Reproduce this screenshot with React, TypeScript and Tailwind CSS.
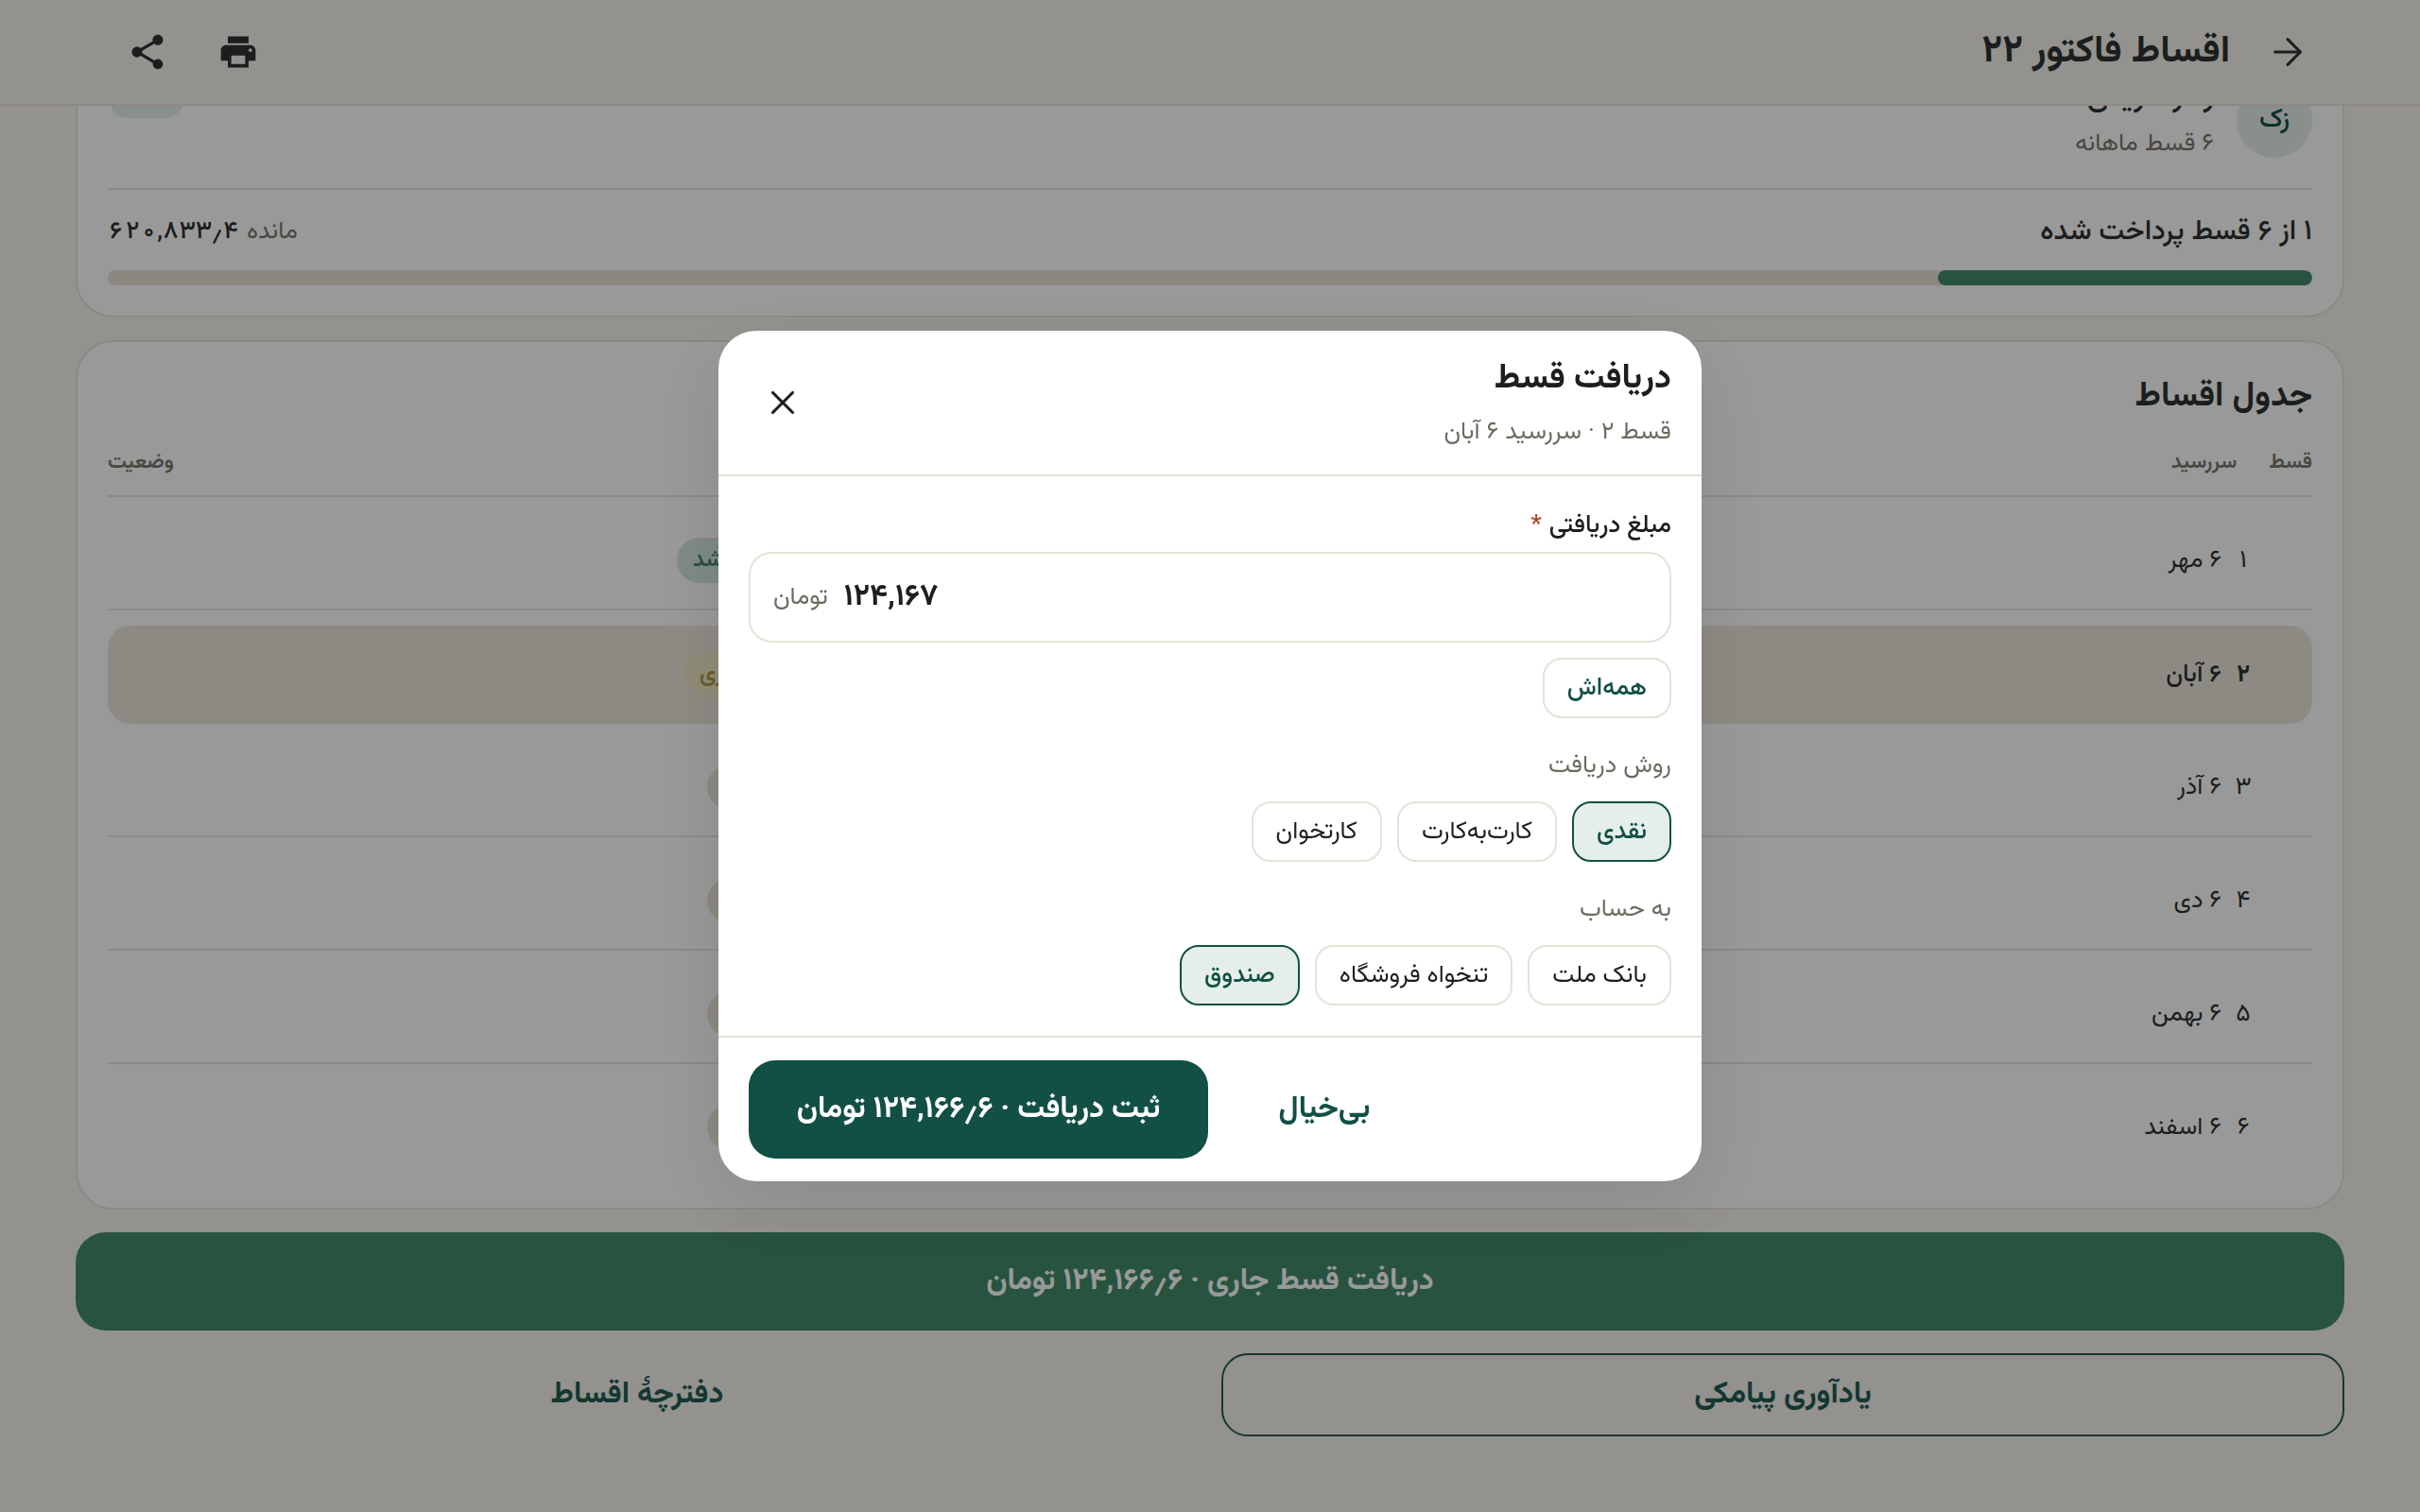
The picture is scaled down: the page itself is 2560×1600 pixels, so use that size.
import React from "react";
import { X, ArrowRight } from "lucide-react";

const ff = "font-['Vazirmatn','Noto_Sans_Arabic','Noto_Sans','DejaVu_Sans',sans-serif]";

function Chip({ label, on }: { label: string; on?: boolean }) {
  return (
    <button
      className={
        "h-[64px] px-[24px] rounded-[20px] border-2 text-[26px] " +
        (on
          ? "border-[#125045] bg-[#e5eeea] text-[#125045] font-medium"
          : "border-[#e6e2d8] bg-white text-[#1c1f1e]")
      }
    >
      {label}
    </button>
  );
}

function Row({ n, date, chip, chipClass, active, last }: { n: string; date: string; chip: string; chipClass: string; active?: boolean; last?: boolean }) {
  return (
    <div
      className={
        "mt-[16px] h-[104px] flex items-center justify-between " +
        (active ? "bg-[#ece7dd] rounded-[24px] font-medium" : last ? "border-b-2 border-transparent" : "border-b-2 border-[#e9e5da]")
      }
    >
      <div className="flex items-center text-[26px] text-[#2e3231]">
        <span className={"w-[96px] pr-[50px] text-center shrink-0 " + (active ? "font-bold" : "")}>{n}</span>
        <span className="shrink-0">{date}</span>
      </div>
      <span className={"h-[48px] px-[17px] flex items-center justify-end rounded-full text-[24px] font-semibold " + chipClass}>{chip}</span>
    </div>
  );
}

export default function App() {
  return (
    <div dir="rtl" className={"w-full h-screen overflow-hidden bg-[#f6f4ee] relative flex flex-col " + ff}>
      <header className="h-[112px] shrink-0 border-b-2 border-[#e9e5da] pr-[117px] pl-[134px] flex items-center justify-between relative z-10 bg-[#f6f4ee]">
        <div className="flex items-center gap-[38px]">
          <ArrowRight size={46} strokeWidth={1.6} className="text-[#2e3231]" />
          <h1 className="text-[40px] font-bold text-[#2e3231]">اقساط فاکتور ۲۲</h1>
        </div>
        <div className="flex items-center gap-[52px]">
          <svg width="44" height="44" viewBox="0 0 24 24" fill="#2e3231"><path d="M19 8H5c-1.66 0-3 1.34-3 3v6h4v4h12v-4h4v-6c0-1.66-1.34-3-3-3zm-3 11H8v-5h8v5zm3-7c-.55 0-1-.45-1-1s.45-1 1-1 1 .45 1 1-.45 1-1 1zm-1-9H6v4h12V3z" /></svg>
          <svg width="44" height="44" viewBox="0 0 24 24" fill="#2e3231"><path d="M18 16.08c-.76 0-1.44.3-1.96.77L8.91 12.7c.05-.23.09-.46.09-.7s-.04-.47-.09-.7l7.05-4.11c.54.5 1.25.81 2.04.81 1.66 0 3-1.34 3-3s-1.34-3-3-3-3 1.34-3 3c0 .24.04.47.09.7L8.04 9.81C7.5 9.31 6.79 9 6 9c-1.66 0-3 1.34-3 3s1.34 3 3 3c.79 0 1.5-.31 2.04-.81l7.12 4.16c-.05.21-.08.43-.08.65 0 1.61 1.31 2.92 2.92 2.92 1.61 0 2.92-1.31 2.92-2.92s-1.31-2.92-2.92-2.92z" /></svg>
        </div>
      </header>

      <main className="flex-1 overflow-hidden px-[80px]">
        <div className="-mt-[59px] flex flex-col gap-[24px]">
          <section className="bg-white border-2 border-[#e9e5da] rounded-[40px] p-[32px]">
            <div className="flex h-[84px] items-start gap-[24px]">
              <div className="w-[80px] h-[80px] rounded-full bg-[#e5eeea] text-[#125045] flex items-center justify-center text-[28px] font-medium shrink-0">زک</div>
              <div className="flex-1 self-end">
                <div className="h-[44px] leading-[44px] text-[32px] font-medium text-[#2e3231]">زهرا کریمی</div>
                <div className="h-[36px] leading-[36px] mt-[10px] text-[26px] text-[#7a776d]">۶ قسط ماهانه</div>
              </div>
              <div className="w-[78px] h-[38px] ml-[2px] rounded-full bg-[#e5eeea]" />
            </div>
            <div className="h-[2px] bg-[#e9e5da] mt-[28px]" />
            <div className="flex justify-between items-center h-[40px] mt-[24px] mb-[21px]">
              <span className="text-[30px] font-medium text-[#2e3231]">۱ از ۶ قسط پرداخت شده</span>
              <span className="flex items-center gap-[8px] text-[26px] text-[#7a776d]">مانده <span className="font-medium tabular-nums text-[#2e3231]">۶۲۰,۸۳۳٫۴</span></span>
            </div>
            <div className="h-[16px] rounded-full bg-[#e8e3d9] overflow-hidden">
              <div className="h-full w-[17%] rounded-full bg-[#438a6b]" />
            </div>
          </section>

          <section className="bg-white border-2 border-[#e9e5da] rounded-[40px] p-[32px]">
            <h2 className="h-[52px] leading-[52px] text-[36px] font-bold text-[#2e3231]">جدول اقساط</h2>
            <div className="flex justify-between text-[22px] font-semibold text-[#7a776d] h-[44px] items-center mt-[21px]">
              <div className="flex gap-[34px]"><span>قسط</span><span>سررسید</span></div>
              <span>وضعیت</span>
            </div>
            <div className="h-[2px] bg-[#e9e5da] mt-[13px]" />
            <Row n="۱" date="۶ مهر" chip="پرداخت شد" chipClass="ml-[602px] w-[180px] bg-[#d4e6e0] text-[#438a6b]" />
            <Row n="۲" date="۶ آبان" chip="جاری" chipClass="ml-[609px] w-[120px] bg-[#eee8c8] text-[#b29446]" active />
            <Row n="۳" date="۶ آذر" chip="در انتظار" chipClass="ml-[634px] w-[130px] bg-[#e9e6d5] text-[#7a776d]" />
            <Row n="۴" date="۶ دی" chip="در انتظار" chipClass="ml-[634px] w-[130px] bg-[#e9e6d5] text-[#7a776d]" />
            <Row n="۵" date="۶ بهمن" chip="در انتظار" chipClass="ml-[634px] w-[130px] bg-[#e9e6d5] text-[#7a776d]" />
            <Row n="۶" date="۶ اسفند" chip="در انتظار" chipClass="ml-[634px] w-[130px] bg-[#e9e6d5] text-[#7a776d]" last />
          </section>

          <button className="h-[104px] rounded-[32px] bg-[#438a6b] text-white text-[32px] font-bold">دریافت قسط جاری · ۱۲۴,۱۶۶٫۶ تومان</button>
          <div className="grid grid-cols-2 gap-[24px]">
            <button className="h-[88px] rounded-[28px] border-2 border-[#235c53] text-[#235c53] text-[32px] font-bold">یادآوری پیامکی</button>
            <button className="h-[88px] rounded-[28px] text-[#235c53] text-[32px] font-bold">دفترچهٔ اقساط</button>
          </div>
        </div>
      </main>

      <div className="fixed inset-0 z-20 bg-black/40 flex items-center justify-center">
        <div className="w-[1040px] h-[900px] bg-white rounded-[40px] shadow-[0_24px_80px_rgba(0,0,0,0.1)] flex flex-col">
          <div className="h-[154px] px-[32px] border-b-2 border-[#e6e2d8] flex items-center justify-between shrink-0">
            <div className="pb-[2px]">
              <div className="text-[36px] font-bold text-[#1c1f1e]">دریافت قسط</div>
              <div className="text-[26px] text-[#6e6b60] mt-[10px]">قسط ۲ · سررسید ۶ آبان</div>
            </div>
            <div className="w-[72px] h-[72px] flex items-center justify-center">
              <X size={42} strokeWidth={1.8} className="text-[#1c1f1e]" />
            </div>
          </div>
          <div className="flex-1 px-[32px] pt-[30px] flex flex-col items-start">
            <div className="text-[26px] font-medium text-[#1c1f1e] h-[44px] flex items-center gap-[8px]">مبلغ دریافتی <span className="text-[#b3452c]">*</span></div>
            <div className="w-full h-[96px] mt-[6px] rounded-[24px] border-2 border-[#e6e2d8] flex items-center justify-end pl-[24px] gap-[17px]">
              <span className="text-[32px] font-bold text-[#1c1f1e]">۱۲۴,۱۶۷</span>
              <span className="text-[26px] text-[#6e6b60]">تومان</span>
            </div>
            <div className="mt-[16px]"><button className="h-[64px] px-[24px] rounded-[20px] border-2 border-[#e6e2d8] text-[#125045] font-medium text-[26px]">همه‌اش</button></div>
            <div className="text-[26px] text-[#6e6b60] mt-[30px] h-[40px] flex items-center">روش دریافت</div>
            <div className="flex gap-[16px] mt-[18px]">
              <Chip label="نقدی" on />
              <Chip label="کارت‌به‌کارت" />
              <Chip label="کارتخوان" />
            </div>
            <div className="text-[26px] text-[#6e6b60] mt-[30px] h-[40px] flex items-center">به حساب</div>
            <div className="flex gap-[16px] mt-[18px]">
              <Chip label="بانک ملت" />
              <Chip label="تنخواه فروشگاه" />
              <Chip label="صندوق" on />
            </div>
          </div>
          <div className="h-[154px] shrink-0 border-t-2 border-[#e6e2d8] px-[32px] flex items-center justify-end gap-[16px]">
            <button className="w-[214px] h-[104px] text-[#125045] text-[32px] font-bold">بی‌خیال</button>
            <button className="w-[486px] h-[104px] rounded-[28px] bg-[#125045] text-white text-[32px] font-bold">ثبت دریافت · ۱۲۴,۱۶۶٫۶ تومان</button>
          </div>
        </div>
      </div>
    </div>
  );
}
